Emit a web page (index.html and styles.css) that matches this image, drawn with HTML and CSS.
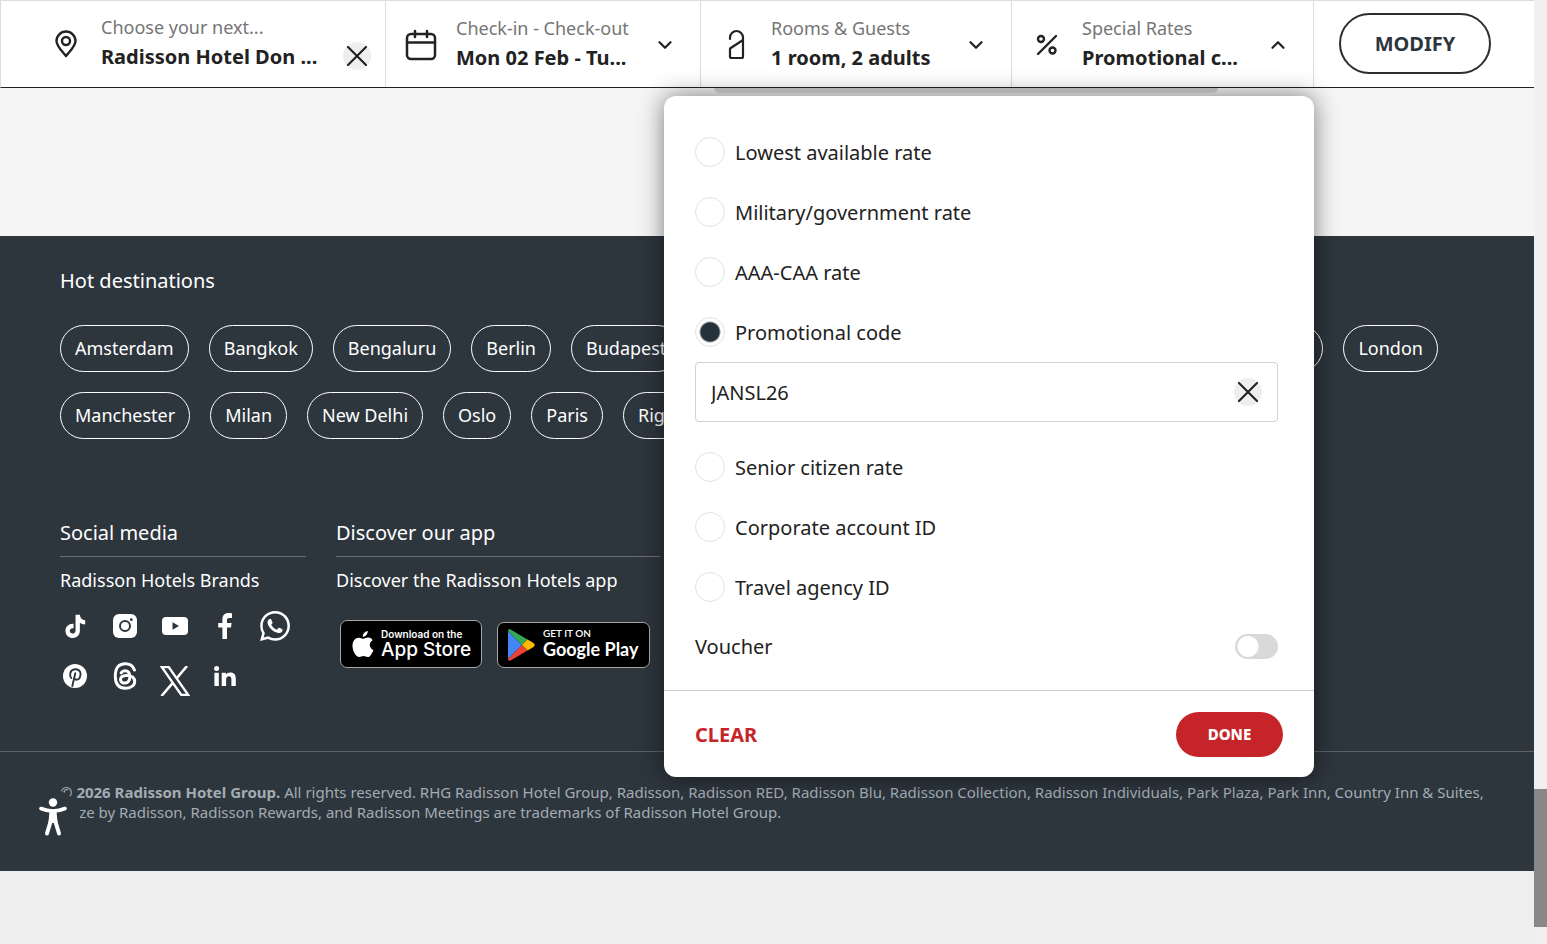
FILE: index.html
```html
<!DOCTYPE html>
<html lang="en">
<head>
    <meta charset="UTF-8">
    <meta name="viewport" content="width=device-width, initial-scale=1.0">
    <title>Radisson Hotels</title>
    <link rel="stylesheet" href="styles.css">
</head>
<body>
    <div class="page">
        <header class="search-bar">
            <div class="search-cell">
                <svg class="icon-pin" viewBox="0 0 24 28" width="24" height="28" fill="none" stroke="#222" stroke-width="2.4"><path d="M12 26C9 22 2.500 16.500 2.500 11a9.500 9.500 0 0 1 19 0c0 5.500-6.500 11-9.500 15z" stroke-linejoin="round"/><circle cx="12" cy="11" r="4"/></svg>
                <div class="search-text">
                    <label class="search-label" for="destination">Choose your next...</label>
                    <input class="search-value" type="text" id="destination" value="Radisson Hotel Don ...">
                </div>
                <button class="clear-btn clear-destination" type="button" aria-label="Clear destination">
                    <svg viewBox="0 0 20 20" width="20" height="20" stroke="#1c1c1c" stroke-width="2" stroke-linecap="round"><path d="M1 1l18 18M19 1L1 19"/></svg>
                </button>
            </div>
            <button class="search-cell" type="button">
                <svg class="icon-calendar" viewBox="0 0 32 32" width="32" height="32" fill="none" stroke="#222" stroke-width="2.500" stroke-linecap="round"><rect x="2" y="5" width="28" height="25" rx="4"/><path d="M2 13.500h28M10 2v6M22 2v6"/></svg>
                <span class="search-text">
                    <span class="search-label">Check-in - Check-out</span>
                    <span class="search-value">Mon 02 Feb - Tu...</span>
                </span>
                <svg class="chevron" viewBox="0 0 14 8" width="14" height="8" fill="none" stroke="#222" stroke-width="2.200" stroke-linecap="round" stroke-linejoin="round"><path d="M1.500 1.200L7 6.800l5.500-5.600"/></svg>
            </button>
            <button class="search-cell" type="button">
                <svg class="icon-room" viewBox="0 0 32 32" width="32" height="32" fill="none" stroke="#222" stroke-width="2.200" stroke-linecap="round" stroke-linejoin="round"><path d="M10 10V8.500a6.500 6.500 0 0 1 13 0V27.500a1.500 1.500 0 0 1-1.500 1.500h-10a1.500 1.500 0 0 1-1.500-1.500V19.500L23 11"/></svg>
                <span class="search-text">
                    <span class="search-label">Rooms &amp; Guests</span>
                    <span class="search-value">1 room, 2 adults</span>
                </span>
                <svg class="chevron" viewBox="0 0 14 8" width="14" height="8" fill="none" stroke="#222" stroke-width="2.200" stroke-linecap="round" stroke-linejoin="round"><path d="M1.500 1.200L7 6.800l5.500-5.600"/></svg>
            </button>
            <div class="rates">
                <button class="search-cell" type="button" aria-expanded="true">
                    <svg class="icon-percent" viewBox="0 0 32 32" width="32" height="32" fill="none" stroke="#222" stroke-width="2.400" stroke-linecap="round"><path d="M7 25L25 7"/><circle cx="10" cy="10" r="3"/><circle cx="21.500" cy="21.500" r="3"/></svg>
                    <span class="search-text">
                        <span class="search-label">Special Rates</span>
                        <span class="search-value">Promotional c...</span>
                    </span>
                    <svg class="chevron" viewBox="0 0 14 8" width="14" height="8" fill="none" stroke="#222" stroke-width="2.200" stroke-linecap="round" stroke-linejoin="round"><path d="M1.500 6.800L7 1.200l5.500 5.600"/></svg>
                </button>

                <form class="rates-menu">
                    <div class="rates-options">
                        <label class="option"><input type="radio" name="rate"> Lowest available rate</label>
                        <label class="option"><input type="radio" name="rate"> Military/government rate</label>
                        <label class="option"><input type="radio" name="rate"> AAA-CAA rate</label>
                        <label class="option"><input type="radio" name="rate" checked> Promotional code</label>
                        <div class="code-field">
                            <input type="text" id="promoCode" aria-label="Promotional code" value="JANSL26">
                            <button class="clear-btn" type="button" aria-label="Clear code">
                                <svg viewBox="0 0 20 20" width="20" height="20" stroke="#1c1c1c" stroke-width="2" stroke-linecap="round"><path d="M1 1l18 18M19 1L1 19"/></svg>
                            </button>
                        </div>
                        <label class="option"><input type="radio" name="rate"> Senior citizen rate</label>
                        <label class="option"><input type="radio" name="rate"> Corporate account ID</label>
                        <label class="option"><input type="radio" name="rate"> Travel agency ID</label>
                        <div class="voucher">
                            <label for="voucher">Voucher</label>
                            <input class="switch" type="checkbox" id="voucher">
                        </div>
                    </div>
                    <div class="rates-actions">
                        <button class="clear-link" type="reset">CLEAR</button>
                        <button class="done-btn" type="button">DONE</button>
                    </div>
                </form>
            </div>
            <div class="search-submit">
                <button class="modify-btn" type="button">MODIFY</button>
            </div>
        </header>

        <main class="content"></main>

        <footer class="footer">
            <section class="destinations">
                <h2>Hot destinations</h2>
                <nav class="pills">
                    <a href="#">Amsterdam</a>
                    <a href="#">Bangkok</a>
                    <a href="#">Bengaluru</a>
                    <a href="#">Berlin</a>
                    <a href="#">Budapest</a>
                    <a href="#">Copenhagen</a>
                    <a href="#">Dubai</a>
                    <a href="#">Edinburgh</a>
                    <a href="#">Frankfurt</a>
                    <a href="#">Helsinki</a>
                    <a href="#">London</a>
                </nav>
                <nav class="pills">
                    <a href="#">Manchester</a>
                    <a href="#">Milan</a>
                    <a href="#">New Delhi</a>
                    <a href="#">Oslo</a>
                    <a href="#">Paris</a>
                    <a href="#">Riga</a>
                </nav>
            </section>

            <div class="columns">
                <section class="column social">
                    <h2>Social media</h2>
                    <p>Radisson Hotels Brands</p>
                    <div class="social-links">
                        <a href="#" aria-label="TikTok"><svg viewBox="0 0 24 24" width="26" height="26" fill="#fff"><path d="M12.500 1.500h4c.3 3 2 4.900 4.900 5.100v4c-1.900 0-3.500-.6-4.900-1.500v7.200c0 4-2.900 6.700-6.600 6.700-3.800 0-6.700-2.900-6.700-6.500 0-4 3.300-6.900 7.500-6.500v4.100c-1.900-.5-3.500.6-3.500 2.300 0 1.500 1.200 2.600 2.600 2.600 1.600 0 2.700-1 2.700-2.900z"/></svg></a>
                        <a href="#" aria-label="Instagram"><svg viewBox="0 0 24 24" width="24" height="24"><rect width="24" height="24" rx="6" fill="#fff"/><circle cx="12" cy="12" r="5" fill="none" stroke="#2d353d" stroke-width="2"/><circle cx="18.300" cy="5.700" r="1.400" fill="#2d353d"/></svg></a>
                        <a href="#" aria-label="YouTube"><svg viewBox="0 0 26 18" width="26" height="18"><rect width="26" height="18" rx="4" fill="#fff"/><path d="M10.500 5.200v7.600L17 9z" fill="#2d353d"/></svg></a>
                        <a href="#" aria-label="Facebook"><svg viewBox="0 0 14 26" width="14" height="26" fill="#fff"><path d="M9 26V14.500h4l.6-4.500H9V7.200C9 5.800 9.500 5 11.300 5H14V.3C13.500.2 12 .1 10.400.1 6.800.1 4.400 2.200 4.400 6.300V10H.2v4.500h4.200V26z"/></svg></a>
                        <a href="#" aria-label="WhatsApp"><svg viewBox="0 0 24 24" width="30" height="30" fill="#fff"><path d="M.06 24l1.690-6.160a11.870 11.870 0 0 1-1.590-5.950C.16 5.340 5.500 0 12.050 0a11.820 11.820 0 0 1 8.410 3.490 11.820 11.820 0 0 1 3.480 8.410c0 6.560-5.340 11.890-11.890 11.890a11.900 11.900 0 0 1-5.690-1.450zM6.650 20.200c1.680 1 3.280 1.590 5.390 1.590 5.450 0 9.890-4.430 9.890-9.880 0-5.460-4.420-9.890-9.880-9.890-5.450 0-9.890 4.430-9.890 9.880 0 2.230.65 3.890 1.750 5.630l-1 3.650zm11.390-5.470c-.07-.12-.27-.2-.57-.35-.3-.15-1.760-.87-2.030-.97s-.47-.15-.67.15-.77.970-.94 1.160-.35.220-.64.080-1.260-.46-2.390-1.480c-.88-.79-1.480-1.760-1.650-2.060s-.02-.46.130-.6c.13-.13.300-.35.450-.52s.2-.3.300-.5.050-.37-.03-.52-.67-1.610-.92-2.210c-.24-.58-.49-.5-.67-.51l-.57-.01c-.2 0-.52.070-.79.370S6 7.780 6 9.250s1.070 2.880 1.210 3.070 2.100 3.200 5.080 4.490c.71.310 1.260.49 1.690.62.710.23 1.360.2 1.870.12.570-.08 1.760-.72 2.010-1.410.25-.7.250-1.290.18-1.410z"/></svg></a>
                        <a href="#" aria-label="Pinterest"><svg viewBox="0 0 24 24" width="24" height="24"><circle cx="12" cy="12" r="12" fill="#fff"/><path d="M8.300 14C6.300 11.500 6.500 5.800 12 5.300c5-.3 6.900 4.200 4.900 8-1.200 2.700-4.300 3.200-5.400 1.200M12.300 9.200L9.300 22" fill="none" stroke="#2d353d" stroke-width="1.900" stroke-linecap="round"/></svg></a>
                        <a href="#" aria-label="Threads"><svg viewBox="0 0 24 28" width="24" height="28" fill="none" stroke="#fff" stroke-width="3" stroke-linecap="round"><path d="M21.500 8C20 3.700 16.800 1.700 12.300 1.700 5.500 1.700 2.300 6 2.300 14s3.200 12.300 10 12.300c5.300 0 9.400-2.800 9.400-6.900 0-4.200-4.100-6.100-8.200-6-4 .1-6 1.700-6 4.100 0 2.300 2 3.700 4.500 3.600 3.500-.2 4.800-2.600 4.800-6.300 0-4.200-1.600-6-4.700-6-1.800 0-3.100.7-4 2"/></svg></a>
                        <a href="#" aria-label="X"><svg class="icon-x" viewBox="0 0 30 30" width="30" height="30" fill="none" stroke="#fff"><path d="M1.700 1h7L28.300 29h-7z" stroke-width="2.300"/><path d="M27 0L16.500 12.500M13 16.700L1.500 30" stroke-width="2.600"/></svg></a>
                        <a href="#" aria-label="LinkedIn"><svg viewBox="0 0 22 20" width="22" height="20" fill="#fff"><circle cx="2.600" cy="2.500" r="2.500"/><path d="M.4 6.800h4.400V20H.4zM7.700 6.800h4.200v1.800c.8-1.400 2.300-2.200 4.300-2.200 4.300 0 5.600 2.600 5.600 6.900V20h-4.400v-6.200c0-2.200-.4-3.600-2.400-3.600s-2.900 1.400-2.900 3.600V20H7.700z"/></svg></a>
                    </div>
                </section>
                <section class="column app">
                    <h2>Discover our app</h2>
                    <p>Discover the Radisson Hotels app</p>
                    <div class="stores">
                        <a class="store store-apple" href="#">
                            <svg viewBox="0 0 22 27" width="22" height="27" fill="#fff"><path d="M15.800 0c.2 2.900-2.100 5.700-5 5.800C10.500 3 13 .3 15.800 0zM20.600 9.200c-4.100 2.500-3.500 8 .8 9.700-.7 2.200-2.700 6.200-4.900 7.100-1.900.5-3-.9-5-.9s-3.200 1.400-5 .9C2.800 24.700.2 18.500.5 14 .8 9.400 3.600 6.600 7 6.700c1.700.1 3.100 1.100 4.400 1.100s3-1.400 5.200-1.200c1.600.1 3.100 1 4 2.600z"/></svg>
                            <span class="store-text"><small>Download on the</small><strong>App Store</strong></span>
                        </a>
                        <a class="store store-google" href="#">
                            <svg viewBox="0 0 28 32" width="28" height="32"><path d="M1 2v28l14-14z" fill="#4285f4"/><path d="M1 2c0-1.500 1.200-2.200 2.600-1.400L20.500 10.500 14.800 16z" fill="#34a853"/><path d="M20.500 10.500l6 3.600c1.500 1 1.500 2.800 0 3.800l-6 3.600-5.700-5.500z" fill="#fbbc04"/><path d="M1 30c0 1.500 1.200 2.200 2.600 1.400l16.900-9.900-5.700-5.500z" fill="#ea4335"/></svg>
                            <span class="store-text"><small>GET IT ON</small><strong>Google Play</strong></span>
                        </a>
                    </div>
                </section>
            </div>

            <div class="legal">
                <p><b>© 2026 Radisson Hotel Group.</b> All rights reserved. RHG Radisson Hotel Group, Radisson, Radisson RED, Radisson Blu, Radisson Collection, Radisson Individuals, Park Plaza, Park Inn, Country Inn &amp; Suites, Prize by Radisson, Radisson Rewards, and Radisson Meetings are trademarks of Radisson Hotel Group.</p>
                <button class="accessibility-btn" type="button" aria-label="Accessibility">
                    <svg viewBox="0 0 28 38" width="28" height="38" fill="none" stroke="#fff" stroke-linecap="round" stroke-linejoin="round"><circle cx="14" cy="4.500" r="4.200" fill="#fff" stroke="none"/><path d="M2 10.500c8 3.500 16 3.500 24 0" stroke-width="3.600"/><path d="M11.500 13h5l1 11h-7z" fill="#fff" stroke-width="2"/><path d="M12 22L8 35.500M16 22l4 13.500" stroke-width="4"/></svg>
                </button>
            </div>
        </footer>
    </div>
    <div class="scroll-track"><div class="scroll-thumb"></div></div>
</body>
</html>
```
FILE: styles.css
```css
* {
    box-sizing: border-box;
}

body {
    display: flex;
    min-height: 100vh;
    margin: 0;
    background-color: #efefef;
    color: #222;
    font-family: "Noto Sans", "Open Sans", sans-serif;
    font-size: 20px;
}

button, input {
    font: inherit;
    color: inherit;
}

button {
    padding: 0;
    border: none;
    background: none;
    cursor: pointer;
}

h2, p {
    margin: 0;
}

svg {
    display: block;
    flex: none;
}

.page {
    flex: 1;
    min-width: 0;
}

/* Search bar */
.search-bar {
    position: relative;
    z-index: 2;
    display: grid;
    grid-template-columns: 385fr 315fr 311fr 302fr 220fr;
    height: 88px;
    background-color: #fff;
    border-top: 1px solid #ddd;
    border-bottom: 1px solid #222;
    border-left: 1px solid #ddd;
}

.search-cell {
    position: relative;
    display: flex;
    align-items: center;
    width: 100%;
    min-width: 0;
    height: 86px;
    padding: 2px 28px 0 19px;
    border-right: 1px solid #ddd;
    text-align: left;
}

div.search-cell {
    padding: 0 14px 0 53px;
}

.search-text {
    display: flex;
    flex: 1;
    flex-direction: column;
    min-width: 0;
    margin: 0 0 4px 19px;
}

div.search-cell .search-text {
    margin-left: 23px;
}

.search-label {
    color: #757575;
    font-size: 18px;
    line-height: 30px;
}

.search-value {
    width: 100%;
    height: 30px;
    padding: 0;
    border: none;
    background: none;
    font-weight: bold;
    line-height: 30px;
    white-space: nowrap;
}

.clear-btn {
    display: flex;
    flex: none;
    align-items: center;
    justify-content: center;
    width: 28px;
    height: 28px;
    border-radius: 50%;
    background-color: #eee;
}

.clear-destination {
    align-self: flex-end;
    margin-bottom: 17px;
}

.search-submit {
    display: flex;
    align-items: center;
    padding: 0 0 2px 25px;
}

.modify-btn {
    width: 152px;
    height: 61px;
    border: 2px solid #2d2d2d;
    border-radius: 31px;
    color: #2d353d;
    font-weight: bold;
}

/* Special rates menu */
.rates {
    position: relative;
}

.rates-menu {
    position: absolute;
    top: 95px;
    right: 0;
    width: 650px;
    border-radius: 12px;
    background-color: #fff;
    box-shadow: 0 0 24px rgba(0, 0, 0, 0.5);
}

.rates-menu::before {
    content: "";
    position: absolute;
    top: -8px;
    left: 50px;
    width: 504px;
    height: 5px;
    border-radius: 0 0 12px 12px;
    background-color: #b0b0b0;
}

.rates-options {
    padding: 26px 36px 15px 31px;
}

.option {
    display: flex;
    align-items: center;
    gap: 10px;
    height: 60px;
}

.option input {
    appearance: none;
    width: 30px;
    height: 30px;
    margin: 0;
    border: 1px solid #e2e2e2;
    border-radius: 50%;
}

.option input:checked {
    background: radial-gradient(circle, #25313b 9px, #fff 11px);
}

.code-field {
    display: flex;
    align-items: center;
    height: 60px;
    margin-bottom: 15px;
    padding: 0 15px;
    border: 1px solid #d0d0d0;
    border-radius: 4px;
}

.code-field input {
    flex: 1;
    min-width: 0;
    padding: 0;
    border: none;
}

.voucher {
    display: flex;
    align-items: center;
    justify-content: space-between;
    height: 58px;
}

.switch {
    appearance: none;
    width: 43px;
    height: 25px;
    margin: 0;
    border-radius: 13px;
    background: radial-gradient(circle at 13px 50%, #fff 10px, #d9d9d9 11px);
}

.rates-actions {
    display: flex;
    align-items: center;
    justify-content: space-between;
    height: 87px;
    padding: 0 31px;
    border-top: 1px solid #ccc;
}

.clear-link {
    color: #c52529;
    font-weight: bold;
}

.done-btn {
    width: 107px;
    height: 45px;
    border-radius: 23px;
    background-color: #c52529;
    color: #fff;
    font-size: 15px;
    font-weight: 800;
}

.content {
    height: 148px;
    background-color: #f5f5f5;
}

/* Footer */
.footer {
    background-color: #2d353d;
    color: #fff;
    font-size: 18px;
}

.footer h2 {
    font-size: 20px;
    font-weight: normal;
    line-height: 30px;
}

.footer a {
    color: #fff;
    text-decoration: none;
}

.destinations {
    padding: 30px 60px 0;
}

.pills {
    display: flex;
    flex-wrap: wrap;
    gap: 20px;
    margin-bottom: 20px;
}

.destinations h2 {
    margin-bottom: 29px;
}

.pills a {
    height: 47px;
    padding: 0 14px;
    border: 1px solid #fff;
    border-radius: 24px;
    line-height: 45px;
}

.columns {
    display: flex;
    gap: 30px;
    padding: 59px 60px 50px;
}

.column h2 {
    padding-bottom: 8px;
    border-bottom: 1px solid #6a7076;
}

.column p {
    margin-top: 8px;
    line-height: 30px;
}

.social {
    width: 246px;
}

.app {
    width: 324px;
}

.social-links {
    display: grid;
    grid-template-columns: repeat(5, 50px);
    grid-auto-rows: 50px;
    width: 250px;
    margin: 6px 0 0 -10px;
}

.social-links a {
    display: flex;
    align-items: center;
    justify-content: center;
}

.icon-x {
    margin-top: 10px;
}

.stores {
    display: flex;
    align-items: center;
    gap: 15px;
    margin: 25px 0 0 4px;
}

.store {
    display: flex;
    align-items: center;
    height: 48px;
    border: 1px solid #a6a6a6;
    border-radius: 7px;
    background-color: #000;
    white-space: nowrap;
}

.store-text {
    display: flex;
    flex-direction: column;
}

.store-text small {
    font-size: 10px;
    font-weight: 600;
    line-height: 12px;
}

.store-text strong {
    font-size: 19px;
    font-weight: 500;
    line-height: 20px;
}

.store-apple {
    flex: none;
    gap: 7px;
    width: 142px;
    padding-left: 11px;
    font-family: Inter, sans-serif;
}

.store-google {
    flex: none;
    gap: 8px;
    width: 153px;
    height: 46px;
    margin-top: 2px;
    padding-left: 9px;
    font-family: Lato, sans-serif;
}

.store-google strong {
    font-size: 18px;
    font-weight: bold;
}

.store-google .store-text {
    margin-bottom: 4px;
}

.legal {
    position: relative;
    min-height: 120px;
    padding: 30px 48px 0 60px;
    border-top: 1px solid #5b6268;
    color: #a3acb3;
    font-size: 15px;
    line-height: 20px;
}

.accessibility-btn {
    position: absolute;
    top: 38px;
    left: 26px;
    display: flex;
    align-items: center;
    justify-content: center;
    width: 54px;
    height: 54px;
    border-radius: 50%;
    background-color: #2d353d;
}

/* Scrollbar strip */
.scroll-track {
    display: flex;
    flex-direction: column;
    justify-content: flex-end;
    width: 13px;
    padding-bottom: 17px;
    background-color: #f0f0f0;
}

.scroll-thumb {
    height: 138px;
    background-color: #888;
}
```
